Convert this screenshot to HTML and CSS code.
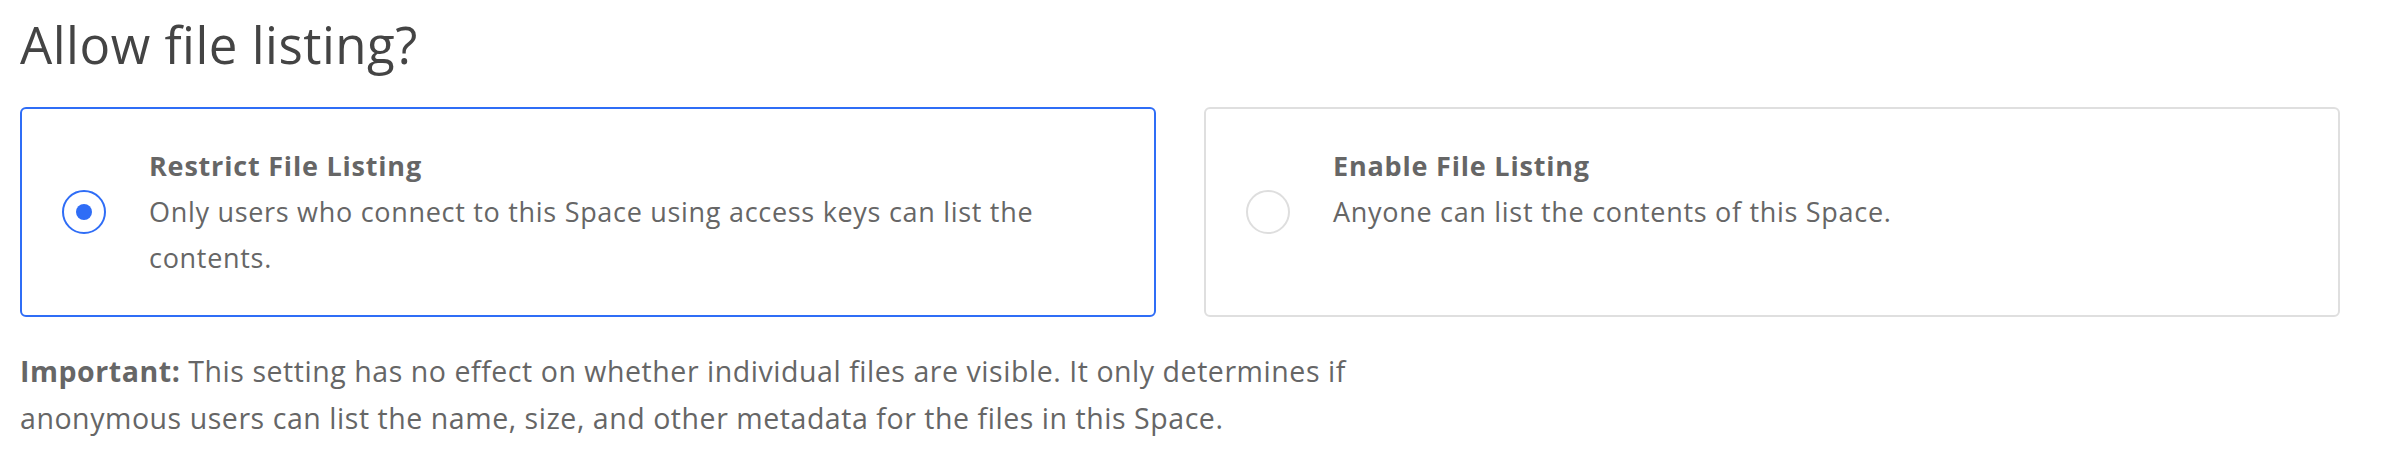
FILE: index.html
```html
<!DOCTYPE html>
<html lang="en">
<head>
<meta charset="utf-8">
<title>Allow file listing?</title>
<link rel="stylesheet" href="styles.css">
</head>
<body>
<main class="page">
  <h1 class="heading">Allow file listing?</h1>
  <div class="options">
    <label class="option option--selected">
      <span class="radio radio--checked"><span class="radio-dot"></span></span>
      <span class="option-text">
        <span class="option-title">Restrict File Listing</span>
        <span class="option-desc">Only users who connect to this Space using access keys can list the contents.</span>
      </span>
    </label>
    <label class="option">
      <span class="radio"></span>
      <span class="option-text">
        <span class="option-title">Enable File Listing</span>
        <span class="option-desc">Anyone can list the contents of this Space.</span>
      </span>
    </label>
  </div>
  <p class="note"><strong>Important:</strong> This setting has no effect on whether individual files are visible. It only determines if anonymous users can list the name, size, and other metadata for the files in this Space.</p>
</main>
</body>
</html>
```

FILE: styles.css
```css
html, body {
  margin: 0;
  padding: 0;
  background: #ffffff;
}

body {
  font-family: "Open Sans", Lato, sans-serif;
  color: #666666;
}

.page {
  padding: 0 56px 0 20px;
}

.heading {
  margin: 0;
  padding-top: 11px;
  font-size: 51px;
  line-height: 66px;
  font-weight: 400;
  letter-spacing: 0.5px;
  color: #444444;
}

.options {
  display: grid;
  grid-template-columns: 1fr 1fr;
  gap: 48px;
  margin-top: 30px;
}

.option {
  display: flex;
  align-items: center;
  border: 2px solid #dfdfdf;
  border-radius: 6px;
  padding: 34px 40px 34px 40px;
  min-height: 138px;
}

.option--selected {
  border-color: #2f6df6;
}

.radio {
  flex: none;
  box-sizing: border-box;
  width: 44px;
  height: 44px;
  border: 2px solid #dedede;
  border-radius: 50%;
  display: flex;
  align-items: center;
  justify-content: center;
  margin-right: 43px;
}

.radio--checked {
  border-color: #2f6df6;
}

.radio-dot {
  width: 16px;
  height: 16px;
  border-radius: 50%;
  background: #2f6df6;
}

.option-text {
  align-self: flex-start;
  display: flex;
  flex-direction: column;
}

.option-title {
  font-size: 27px;
  line-height: 46px;
  font-weight: 700;
  letter-spacing: 0.8px;
  color: #666666;
}

.option-desc {
  font-size: 27px;
  line-height: 46px;
  letter-spacing: 0.7px;
  color: #666666;
}

.note {
  margin: 31px 0 0 0;
  max-width: 1350px;
  font-size: 28.5px;
  line-height: 47px;
  letter-spacing: 0.55px;
  color: #666666;
}

.note strong {
  font-weight: 700;
}
```
